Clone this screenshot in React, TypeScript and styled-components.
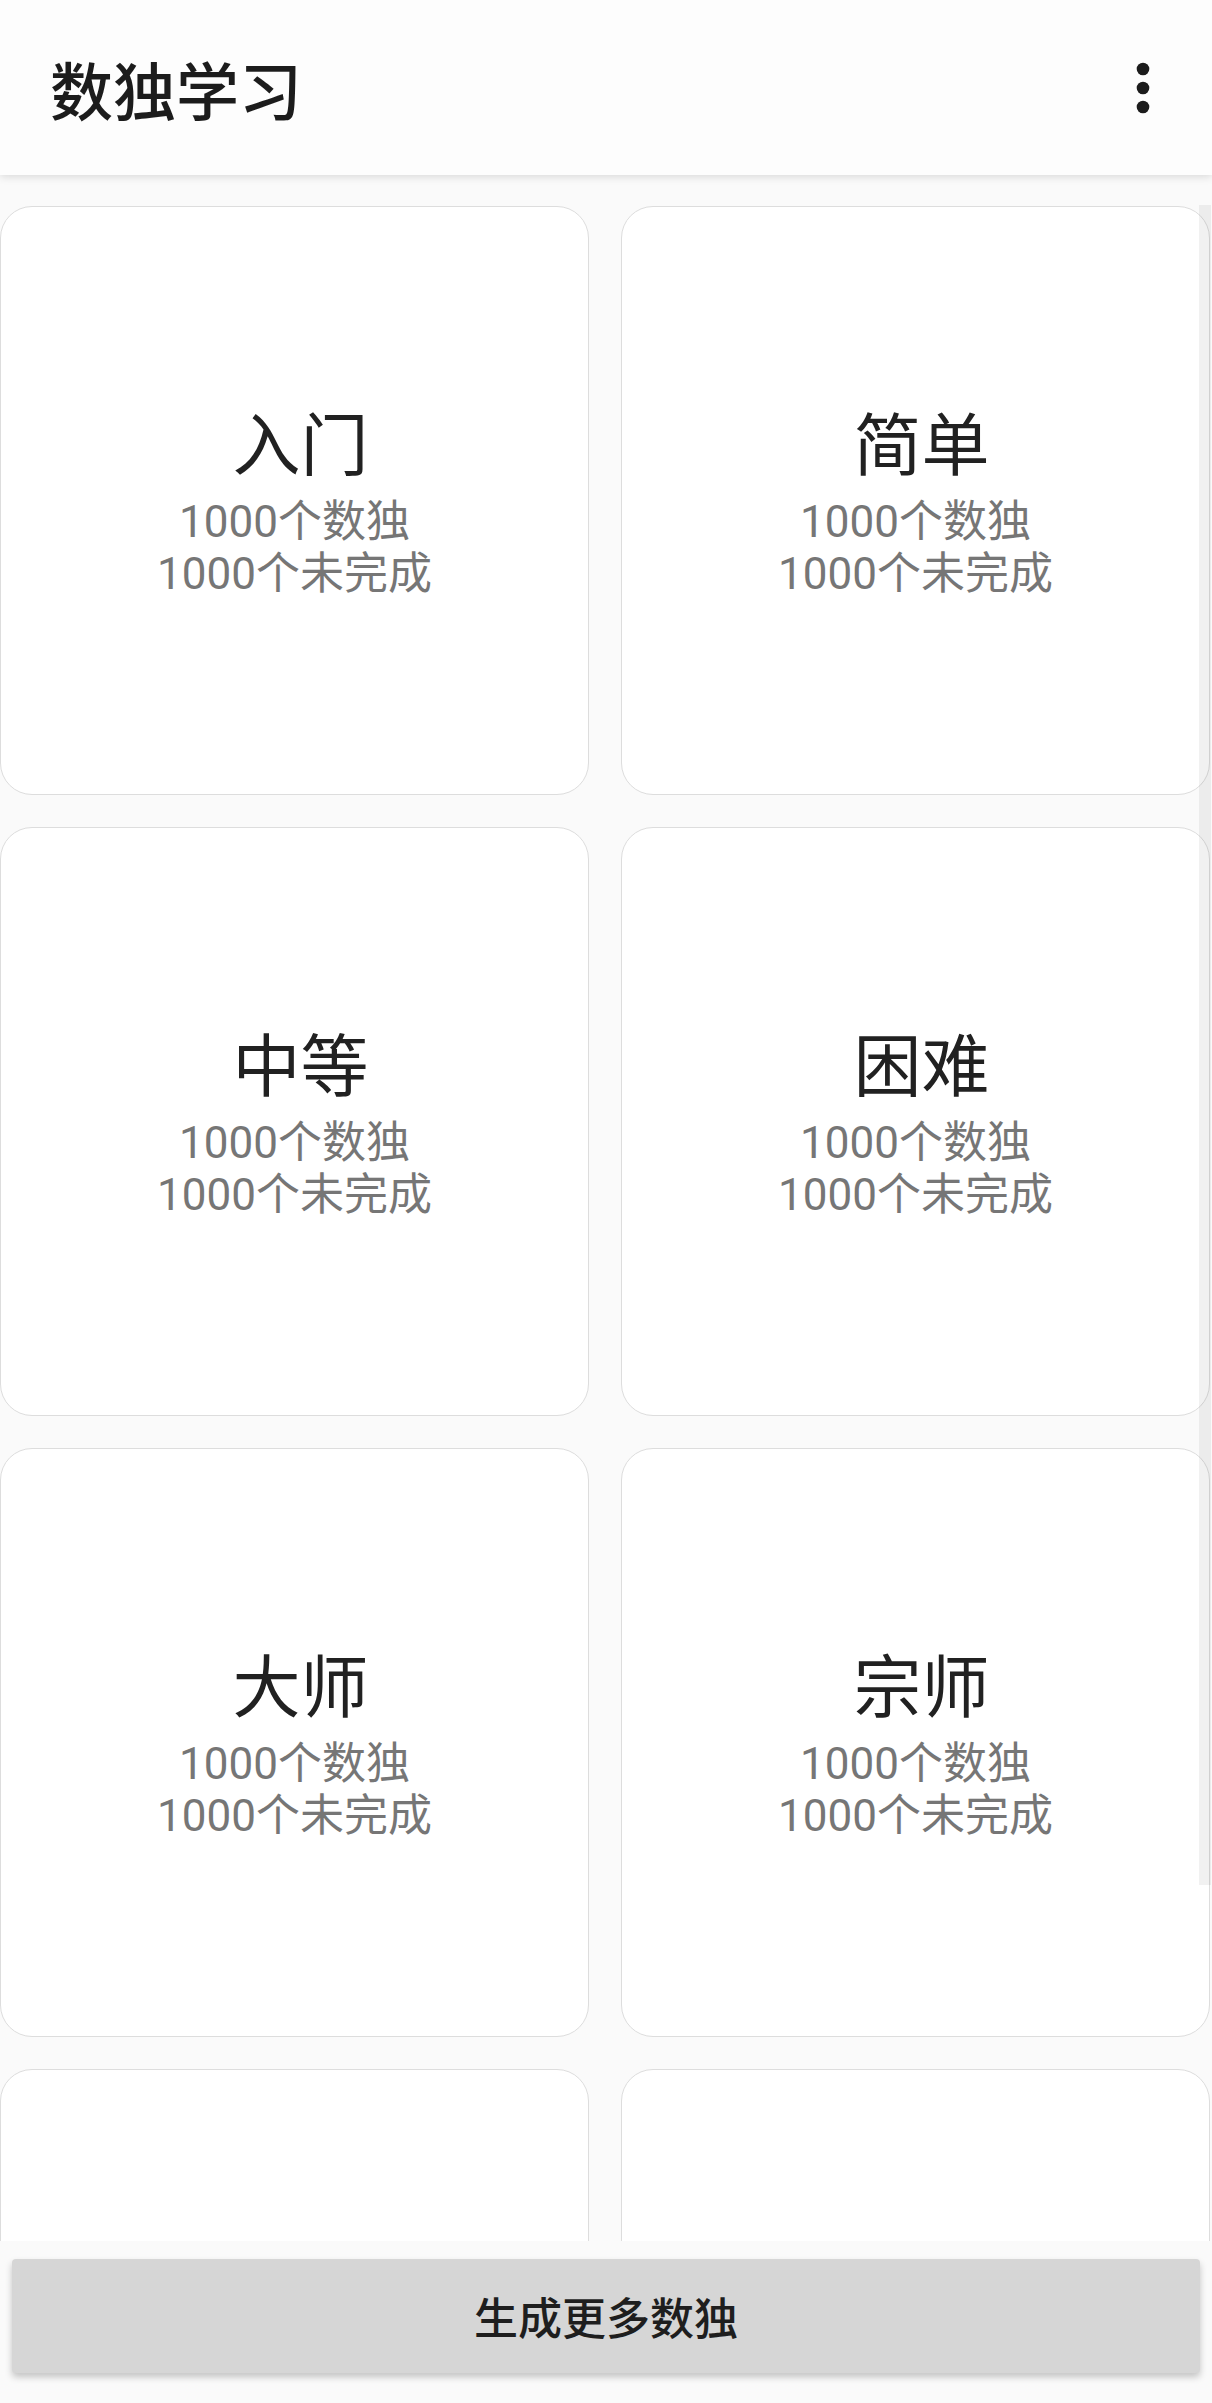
import React from "react";
import styled, { createGlobalStyle } from "styled-components";

const GlobalStyle = createGlobalStyle`
  html, body {
    margin: 0;
    padding: 0;
    background: #fafafa;
  }
  * { box-sizing: border-box; }
`;

const Screen = styled.div`
  width: 1212px;
  height: 2403px;
  display: flex;
  flex-direction: column;
  overflow: hidden;
  background: #fafafa;
  font-family: "Noto Sans CJK SC", "Noto Sans", sans-serif;
`;

const AppBar = styled.header`
  position: relative;
  z-index: 2;
  flex: 0 0 175px;
  display: flex;
  align-items: center;
  padding: 0 45px 0 50px;
  background: #fdfdfd;
  box-shadow: 0 2px 8px rgba(0, 0, 0, 0.13);
`;

const AppTitle = styled.h1`
  margin: 0;
  font-family: "Noto Sans CJK SC", sans-serif;
  font-size: 63px;
  line-height: 63px;
  font-weight: 500;
  color: #1c1c1c;
`;

const MenuButton = styled.button`
  margin-left: auto;
  width: 48px;
  height: 64px;
  padding: 0;
  border: none;
  background: transparent;
  display: flex;
  align-items: center;
  justify-content: center;
`;

const ListArea = styled.main`
  position: relative;
  flex: 1 1 auto;
  overflow: hidden;
`;

const Grid = styled.div`
  display: grid;
  grid-template-columns: 589px 589px;
  column-gap: 32px;
  row-gap: 32px;
  padding: 31px 0 0 0;
`;

const Card = styled.div`
  height: 589px;
  background: #ffffff;
  border: 1px solid #dddddd;
  border-radius: 32px;
  display: flex;
  flex-direction: column;
  align-items: center;
  justify-content: center;
  padding-top: 6px;
`;

const CardTitle = styled.div`
  font-family: "Noto Sans CJK SC", sans-serif;
  font-size: 68px;
  line-height: 68px;
  color: #212121;
  padding-left: 12px;
`;

const CardInfo = styled.div`
  margin-top: 21px;
  font-family: "Roboto", "Noto Sans CJK SC", sans-serif;
  font-size: 44px;
  line-height: 52px;
  color: #767676;
  text-align: center;
`;

const ScrollThumb = styled.div`
  position: absolute;
  top: 30px;
  right: 1px;
  width: 12px;
  height: 1680px;
  background: rgba(0, 0, 0, 0.055);
`;

const Footer = styled.footer`
  flex: 0 0 162px;
  padding: 18px 12px 30px 12px;
  background: #fafafa;
`;

const GenerateButton = styled.button`
  width: 100%;
  height: 114px;
  border: none;
  border-radius: 4px;
  background: #d6d6d6;
  box-shadow: 0 4px 7px rgba(0, 0, 0, 0.22);
  font-family: "Noto Sans CJK SC", sans-serif;
  font-size: 44px;
  font-weight: 500;
  color: #1e1e1e;
  display: flex;
  align-items: center;
  justify-content: center;
`;

const levels = ["入门", "简单", "中等", "困难", "大师", "宗师", "专家", "极限"];

export default function App() {
  return (
    <>
      <GlobalStyle />
      <Screen>
        <AppBar>
          <AppTitle>数独学习</AppTitle>
          <MenuButton aria-label="更多">
            <svg width="14" height="52" viewBox="0 0 14 52">
              <circle cx="7" cy="7" r="6.3" fill="#1c1c1c" />
              <circle cx="7" cy="26" r="6.3" fill="#1c1c1c" />
              <circle cx="7" cy="45" r="6.3" fill="#1c1c1c" />
            </svg>
          </MenuButton>
        </AppBar>
        <ListArea>
          <Grid>
            {levels.map((name) => (
              <Card key={name}>
                <CardTitle>{name}</CardTitle>
                <CardInfo>
                  1000个数独
                  <br />
                  1000个未完成
                </CardInfo>
              </Card>
            ))}
          </Grid>
          <ScrollThumb />
        </ListArea>
        <Footer>
          <GenerateButton>生成更多数独</GenerateButton>
        </Footer>
      </Screen>
    </>
  );
}
